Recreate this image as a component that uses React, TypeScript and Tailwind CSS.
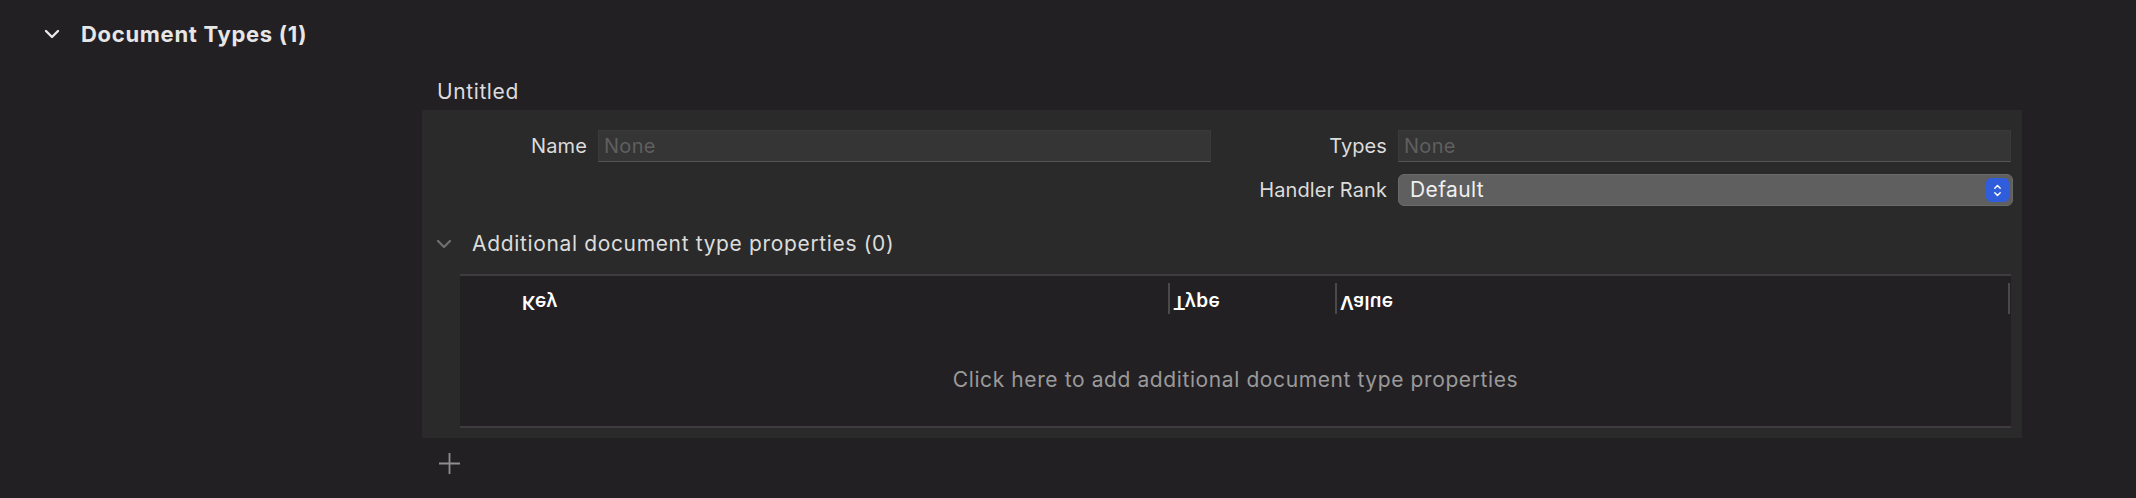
import React from 'react';

function Chevron({ className }: { className?: string }) {
  return (
    <svg viewBox="0 0 16 10" className={className} fill="none" stroke="currentColor" strokeWidth="2.4" strokeLinecap="round" strokeLinejoin="round">
      <path d="M2 2l6 6 6-6" />
    </svg>
  );
}

function Field({ label }: { label: string }) {
  return (
    <div className="flex items-center gap-[11px]">
      <div className="w-[165px] text-right text-[20px] tracking-[0.1px] text-[#dcdcdc]">{label}</div>
      <div className="w-[613px] h-[32px] bg-[#353535] border border-[#3a3a3a] border-b-[#555555] flex items-center px-[5px] text-[20px] tracking-[0.3px] text-[#5f5f5f]">
        None
      </div>
    </div>
  );
}

export default function App() {
  return (
    <div className="w-[2136px] h-[498px] bg-[#232024] text-[#dcdcdc] font-['Inter',sans-serif] overflow-hidden">
      <div className="flex items-center h-[68px] pl-[44px] gap-[21px]">
        <Chevron className="w-[16px] h-[10px] text-[#e8e8e8]" />
        <span className="text-[22px] tracking-[0.7px] font-bold text-[#e6e6e6]">Document Types (1)</span>
      </div>

      <div className="ml-[422px] w-[1600px]">
        <div className="pl-[15px] h-[42px] pt-[5px] flex items-center text-[21px] tracking-[0.6px]">Untitled</div>

        <div className="bg-[#2a2a2a] h-[328px] pt-[20px] pb-[10px] flex flex-col">
          <div className="flex gap-[11px]">
            <Field label="Name" />
            <Field label="Types" />
          </div>

          <div className="flex items-center gap-[11px] mt-[12px] ml-[800px]">
            <div className="w-[165px] text-right text-[20px] tracking-[0.1px] text-[#dcdcdc]">Handler Rank</div>
            <div className="w-[615px] h-[32px] rounded-[6px] bg-[#5f5f5f] border border-[#6a6a6a] flex items-center justify-between pl-[11px] pr-[3px]">
              <span className="text-[21px] tracking-[0.4px] text-[#f0f0f0]">Default</span>
              <div className="w-[23px] h-[24px] rounded-[5px] bg-[#2f5ddc] flex items-center justify-center">
                <svg viewBox="0 0 10 16" className="w-[9px] h-[15px]" fill="none" stroke="#ffffff" strokeWidth="1.6" strokeLinecap="round" strokeLinejoin="round">
                  <path d="M2 5.5l3-3 3 3M2 10.5l3 3 3-3" />
                </svg>
              </div>
            </div>
          </div>

          <div className="flex items-center h-[32px] mt-[22px] pl-[14px] gap-[20px]">
            <Chevron className="w-[16px] h-[10px] text-[#6e6e6e]" />
            <span className="text-[21px] tracking-[0.65px] text-[#dcdcdc]">Additional document type properties (0)</span>
          </div>

          <div className="mt-[14px] ml-[38px] mr-[11px] flex-1 flex flex-col border-y-2 border-[#3f3b3e] bg-[#232024]">
            <div className="h-[44px] flex items-center">
              <div className="w-[708px] pl-[62px] flex items-center">
                <span className="-scale-y-100 translate-y-[3px] text-[19px] tracking-[0.4px] font-semibold text-white">Key</span>
              </div>
              <div className="w-[167px] flex items-center gap-[3px]">
                <div className="w-[2px] h-[31px] bg-[#4a4a4a]" />
                <span className="-scale-y-100 translate-y-[3px] text-[19px] tracking-[0.4px] font-semibold text-white">Type</span>
              </div>
              <div className="flex-1 flex items-center gap-[3px]">
                <div className="w-[2px] h-[31px] bg-[#4a4a4a]" />
                <span className="-scale-y-100 translate-y-[3px] text-[19px] tracking-[0.4px] font-semibold text-white">Value</span>
              </div>
              <div className="w-[2px] h-[31px] bg-[#4a4a4a] mr-[1px]" />
            </div>
            <div className="flex-1 flex items-center justify-center pt-[14px] text-[21px] tracking-[0.6px] text-[#9a9a9a]">
              Click here to add additional document type properties
            </div>
          </div>
        </div>

        <div className="h-[50px] flex items-center pl-[17px]">
          <svg viewBox="0 0 21 21" className="w-[21px] h-[21px]" fill="none" stroke="#8e8e8e" strokeWidth="1.8">
            <path d="M10.5 0v21M0 10.5h21" />
          </svg>
        </div>
      </div>
    </div>
  );
}
